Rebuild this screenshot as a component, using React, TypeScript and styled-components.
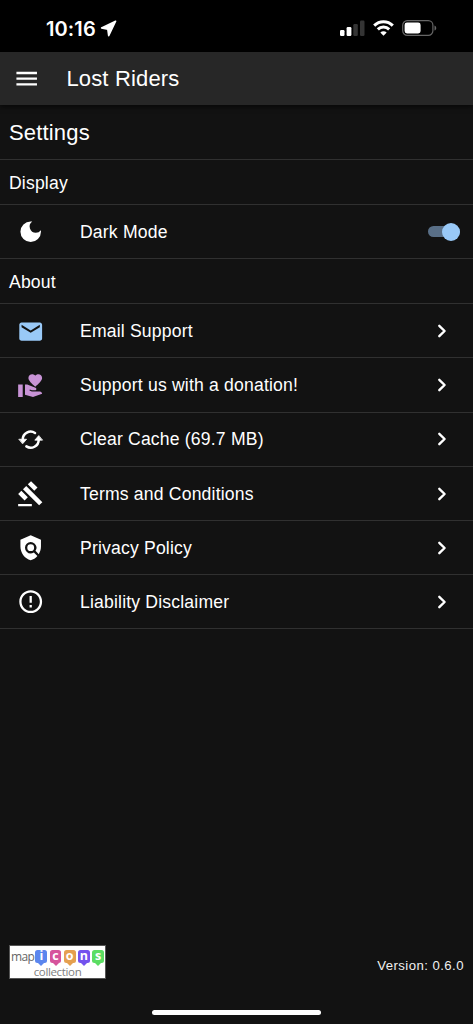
import React from 'react';
import styled, { createGlobalStyle } from 'styled-components';
import {
  MdMenu, MdDarkMode, MdEmail, MdVolunteerActivism, MdGavel, MdPolicy, MdErrorOutline,
} from 'react-icons/md';

const GlobalStyle = createGlobalStyle`
  * { box-sizing: border-box; }
  body { margin: 0; background: #121212; }
`;

const Screen = styled.div`
  width: 100%;
  height: 1024px;
  display: flex;
  flex-direction: column;
  background: #121212;
  color: #fff;
  font-family: "Liberation Sans", Arial, sans-serif;
  overflow: hidden;
`;

const StatusBar = styled.div`
  height: 52px;
  flex: none;
  display: flex;
  align-items: center;
  justify-content: space-between;
  padding: 4px 36px 0 46px;
  background: #000;
`;

const Clock = styled.div`
  display: flex;
  align-items: center;
  gap: 4px;
  padding-top: 1px;
  font: 600 20px/24px Inter, sans-serif;
  letter-spacing: 0.1px;
`;

const Indicators = styled.div`
  display: flex;
  align-items: center;
  gap: 8px;
  svg { display: block; }
`;

const AppBar = styled.header`
  height: 53px;
  flex: none;
  display: flex;
  align-items: center;
  gap: 26px;
  padding: 1px 13px 0;
  background: #272727;
  box-shadow: 0 2px 5px rgba(0, 0, 0, 0.6);
`;

const Title = styled.h1`
  margin: 0;
  font-size: 22px;
  font-weight: 400;
  line-height: 32px;
  letter-spacing: 0.165px;
`;

const PageHeading = styled.h2`
  height: 54.6px;
  flex: none;
  margin: 0;
  padding: 0 9px;
  border-bottom: 1px solid #303030;
  font-size: 22px;
  font-weight: 400;
  line-height: 55px;
  letter-spacing: 0.165px;
`;

const SectionHeading = styled.h3`
  height: 45.3px;
  flex: none;
  margin: 0;
  padding: 0 9px;
  border-bottom: 1px solid #303030;
  font-size: 17.6px;
  font-weight: 400;
  line-height: 46px;
  letter-spacing: 0.165px;
`;

const Row = styled.div`
  height: 54.15px;
  flex: none;
  display: flex;
  align-items: center;
  padding: 0.6px 13px 0 17.4px;
  border-bottom: 1px solid #303030;
`;

const RowIcon = styled.span<{ $color?: string }>`
  display: flex;
  width: 62.6px;
  color: ${(p) => p.$color ?? '#fff'};
`;

const Label = styled.span`
  flex: 1;
  font-size: 17.6px;
  line-height: 28px;
  letter-spacing: 0.18px;
`;

const Track = styled.span`
  display: flex;
  align-items: center;
  justify-content: flex-end;
  width: 32px;
  height: 11px;
  border-radius: 6px;
  background: #596f87;
`;

const Thumb = styled.span`
  width: 18px;
  height: 18px;
  flex: none;
  border-radius: 50%;
  background: #99c9f7;
`;

const ChevronBox = styled.span`
  display: flex;
  width: 22px;
  margin-right: 7px;
`;

const Footer = styled.footer`
  margin-top: auto;
  display: flex;
  align-items: flex-end;
  justify-content: space-between;
  padding: 0 9px;
`;

const MapLogo = styled.div`
  width: 97px;
  height: 34px;
  padding: 2px 1px 0;
  border: 1px solid #555;
  background: #fff;
  color: #666;
`;

const LogoLine = styled.div`
  display: flex;
  height: 18px;
  gap: 2.4px;
`;

const MapWord = styled.span`
  width: 22px;
  font: 12px/17px "Open Sans", sans-serif;
  letter-spacing: -0.7px;
`;

const Pin = styled.span<{ $color: string }>`
  position: relative;
  width: 12px;
  height: 13px;
  margin-top: 2px;
  border-radius: 2.5px;
  background: ${(p) => p.$color};
  color: #fff;
  font: 700 12.5px/11px "Open Sans", sans-serif;
  text-align: center;
  &::after {
    content: '';
    position: absolute;
    left: 3px;
    top: 12.5px;
    border: solid transparent;
    border-width: 3px 3px 0;
    border-top-color: ${(p) => p.$color};
  }
`;

const CollectionWord = styled.div`
  font: 11.5px/11px "Open Sans", sans-serif;
  letter-spacing: -0.35px;
  text-align: center;
  color: #808080;
`;

const Version = styled.span`
  font-size: 13.2px;
  line-height: 26px;
  letter-spacing: 0.44px;
  color: #f0f0f0;
`;

const HomeIndicator = styled.div`
  width: 169px;
  height: 5px;
  flex: none;
  margin: 30.5px auto 9.5px;
  border-radius: 3px;
  background: #fff;
`;

const CacheIcon = ({ size }: { size: number }) => (
  <svg width={size} height={size} viewBox="0 0 24 24" fill="none" stroke="currentColor" strokeWidth="2.2" strokeLinecap="round">
    <path d="M15.8 6.1A7 7 0 0 0 5 12" />
    <path d="M8.2 17.9A7 7 0 0 0 19 12" />
    <path d="M1.9 11.6h6.5L5.1 15.4zM22.1 12.4h-6.5l3.3-3.8z" fill="currentColor" strokeWidth=".7" strokeLinejoin="round" />
  </svg>
);

const items = [
  { label: 'Email Support', Icon: MdEmail, color: '#99c9f7' },
  { label: 'Support us with a donation!', Icon: MdVolunteerActivism, color: '#c893d6' },
  { label: 'Clear Cache (69.7 MB)', Icon: CacheIcon },
  { label: 'Terms and Conditions', Icon: MdGavel },
  { label: 'Privacy Policy', Icon: MdPolicy },
  { label: 'Liability Disclaimer', Icon: MdErrorOutline },
];

const pins = [
  ['i', '#5b86ee'], ['c', '#d6549c'], ['o', '#e5a050'], ['n', '#7352ee'], ['s', '#5bdd62'],
];

const Chevron = () => (
  <ChevronBox>
    <svg width="22" height="22" viewBox="0 0 22 22" fill="none" stroke="#fff" strokeWidth="2.4" strokeLinecap="round" strokeLinejoin="round">
      <path d="M8.3 5.8 13.6 11l-5.3 5.2" />
    </svg>
  </ChevronBox>
);

export default function App() {
  return (
    <Screen>
      <GlobalStyle />
      <StatusBar>
        <Clock>
          10:16
          <svg width="17" height="17" viewBox="0 0 17 17" fill="#fff" stroke="#fff" strokeWidth="1.6" strokeLinejoin="round">
            <path d="M15.6 1.2 1.6 7.9l6.2 1.3.9 6.4z" />
          </svg>
        </Clock>
        <Indicators>
          <svg width="25" height="16" viewBox="0 0 25 16">
            <rect x="0" y="10" width="4.5" height="6" rx="1.2" fill="#fff" />
            <rect x="6.6" y="7" width="4.8" height="9" rx="1.2" fill="#fff" />
            <rect x="13.3" y="4" width="4.5" height="12" rx="1.2" fill="#343434" />
            <rect x="20" y="0.5" width="4.5" height="15.5" rx="1.2" fill="#343434" />
          </svg>
          <svg width="21" height="16" viewBox="0 0 21 16" fill="none" stroke="#fff" strokeWidth="3">
            <path d="M1.2 5.6C6.4.4 14.6.4 19.8 5.6" />
            <path d="M4.8 9.4c3.2-3.2 8.2-3.2 11.4 0" />
            <path d="M10.5 15.7 7.3 12.5c1.8-1.6 4.6-1.6 6.4 0z" fill="#fff" stroke="none" />
          </svg>
          <svg width="35" height="16" viewBox="0 0 35 16">
            <rect x="0.7" y="0.7" width="30.2" height="14.6" rx="4.6" fill="none" stroke="#666" strokeWidth="1.2" />
            <rect x="2.6" y="2.6" width="16" height="10.8" rx="2.4" fill="#fff" />
            <path d="M32.5 5.4c2.3 1 2.3 4.2 0 5.2z" fill="#666" />
          </svg>
        </Indicators>
      </StatusBar>
      <AppBar>
        <MdMenu size={27.4} />
        <Title>Lost Riders</Title>
      </AppBar>
      <PageHeading>Settings</PageHeading>
      <SectionHeading>Display</SectionHeading>
      <Row>
        <RowIcon><MdDarkMode size={27.4} /></RowIcon>
        <Label>Dark Mode</Label>
        <Track><Thumb /></Track>
      </Row>
      <SectionHeading>About</SectionHeading>
      {items.map(({ label, Icon, color }) => (
        <Row key={label}>
          <RowIcon $color={color}><Icon size={27.4} /></RowIcon>
          <Label>{label}</Label>
          <Chevron />
        </Row>
      ))}
      <Footer>
        <MapLogo>
          <LogoLine>
            <MapWord>map</MapWord>
            {pins.map(([letter, color]) => <Pin key={letter} $color={color}>{letter}</Pin>)}
          </LogoLine>
          <CollectionWord>collection</CollectionWord>
        </MapLogo>
        <Version>Version: 0.6.0</Version>
      </Footer>
      <HomeIndicator />
    </Screen>
  );
}
